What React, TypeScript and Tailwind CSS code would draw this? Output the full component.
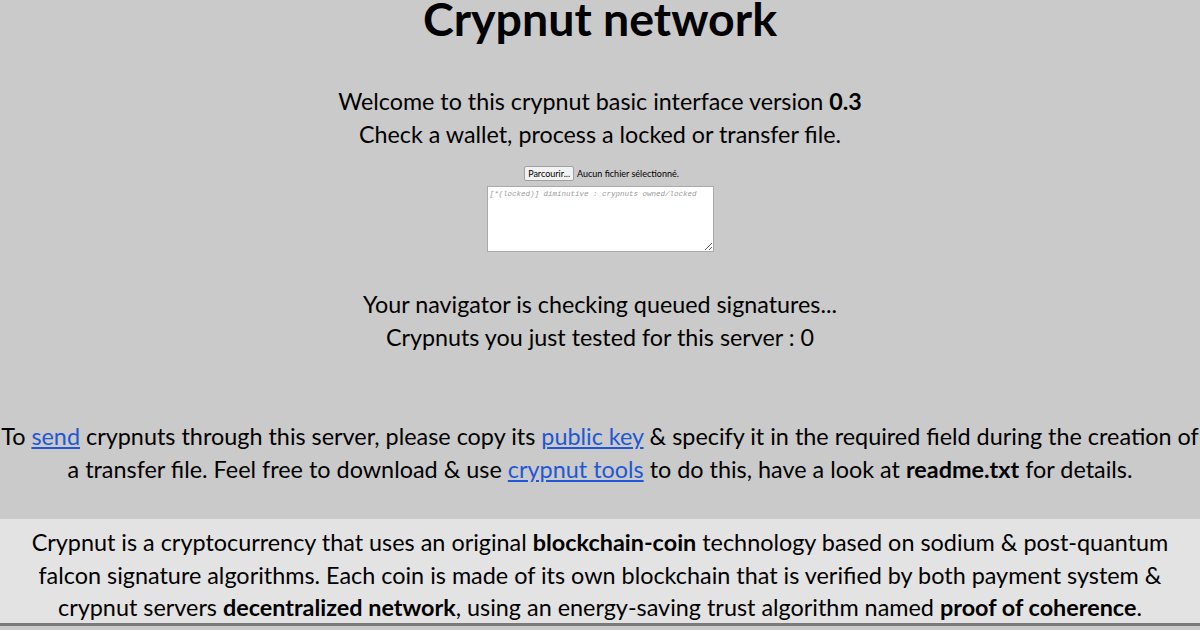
export default function App() {
  return (
    <div className="h-[630px] w-[1200px] overflow-hidden bg-[#cacaca] font-['Lato',sans-serif] text-black">
      <h1 className="-mt-[7px] text-center text-[46.5px] font-bold leading-[50px]">Crypnut network</h1>

      <p className="mt-[42px] text-center text-[23.3px] leading-[33px]">
        Welcome to this crypnut basic interface version <b>0.3</b>
        <br />
        Check a wallet, process a locked or transfer file.
      </p>

      <div className="mt-[15px] flex h-[15px] items-center justify-center gap-[3px] pl-[3px] text-[9px]">
        <button className="h-[15px] rounded-[2px] border border-[#a0a0a0] bg-[#f2f2f2] px-[3px] text-[9px] leading-[13px]">
          Parcourir...
        </button>
        <span>Aucun fichier sélectionné.</span>
      </div>

      <div className="mt-[5px] flex justify-center">
        <textarea
          readOnly
          placeholder="[*(locked)] diminutive : crypnuts owned/locked"
          className="h-[66px] w-[227px] border border-[#a9a9a9] bg-white px-[2px] py-[2px] font-['Liberation_Mono',monospace] text-[7.5px] italic placeholder:text-[#9a9a9a]"
        />
      </div>

      <p className="mt-[36px] text-center text-[23.3px] leading-[33px]">
        Your navigator is checking queued signatures...
        <br />
        Crypnuts you just tested for this server : 0
      </p>

      <p className="mt-[66px] whitespace-nowrap text-center text-[23.4px] leading-[33px]">
        To <a className="text-[#1f57d6] underline" href="#">send</a> crypnuts through this server, please copy its{" "}
        <a className="text-[#1f57d6] underline" href="#">public key</a> &amp; specify it in the required field during the creation of
        <br />
        a transfer file. Feel free to download &amp; use{" "}
        <a className="text-[#1f57d6] underline" href="#">crypnut tools</a> to do this, have a look at <b>readme.txt</b> for details.
      </p>

      <div className="mt-[33px] h-[107px] border-b-[3px] border-[#7a7a7a] bg-[#e3e3e3] pt-[7px]">
        <p className="whitespace-nowrap text-center text-[23.4px] leading-[32.5px]">
          Crypnut is a cryptocurrency that uses an original <b>blockchain-coin</b> technology based on sodium &amp; post-quantum
          <br />
          falcon signature algorithms. Each coin is made of its own blockchain that is verified by both payment system &amp;
          <br />
          crypnut servers <b>decentralized network</b>, using an energy-saving trust algorithm named <b>proof of coherence</b>.
        </p>
      </div>
    </div>
  );
}
